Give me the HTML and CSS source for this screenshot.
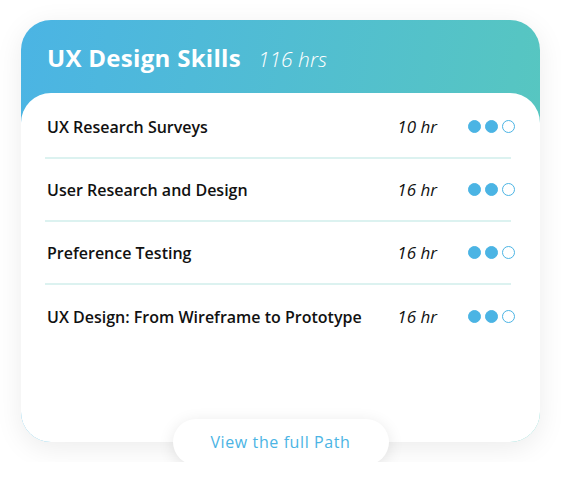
FILE: index.html
```html
<!DOCTYPE html>
<html lang="en">
<head>
    <meta charset="UTF-8">
    <meta name="viewport" content="width=device-width, initial-scale=1.0">
    <title>UX Design Skills</title>
    <link rel="stylesheet" href="styles.css">
</head>
<body>
    <div class="path-card">
        <div class="path-header">
            <h1 class="path-title">UX Design Skills</h1>
            <span class="path-hours">116 hrs</span>
        </div>
        <div class="path-body">
            <div class="course">
                <div class="course-name">UX Research Surveys</div>
                <div class="course-hours">10 hr</div>
                <div class="level">
                    <span class="dot full"></span>
                    <span class="dot full"></span>
                    <span class="dot"></span>
                </div>
            </div>
            <div class="course">
                <div class="course-name">User Research and Design</div>
                <div class="course-hours">16 hr</div>
                <div class="level">
                    <span class="dot full"></span>
                    <span class="dot full"></span>
                    <span class="dot"></span>
                </div>
            </div>
            <div class="course">
                <div class="course-name">Preference Testing</div>
                <div class="course-hours">16 hr</div>
                <div class="level">
                    <span class="dot full"></span>
                    <span class="dot full"></span>
                    <span class="dot"></span>
                </div>
            </div>
            <div class="course">
                <div class="course-name">UX Design: From Wireframe to Prototype</div>
                <div class="course-hours">16 hr</div>
                <div class="level">
                    <span class="dot full"></span>
                    <span class="dot full"></span>
                    <span class="dot"></span>
                </div>
            </div>
        </div>
        <div class="path-footer">
            <a class="path-link" href="#">View the full Path</a>
        </div>
    </div>
</body>
</html>
```

FILE: styles.css
```css
* {
    margin: 0;
    padding: 0;
    box-sizing: border-box;
}

body {
    background: #fff;
    font-family: 'Open Sans', 'Noto Sans', sans-serif;
    color: #111;
    padding: 20px 21px;
}

.path-card {
    width: 519px;
    height: 422px;
    border-radius: 30px;
    background: linear-gradient(100deg, #4bb4e4 0%, #58c8bd 100%);
    box-shadow: 0 6px 28px rgba(0, 0, 0, 0.08);
    display: flex;
    flex-direction: column;
    position: relative;
}

.path-header {
    height: 73px;
    display: flex;
    align-items: baseline;
    padding: 21px 26px 0;
    gap: 17px;
    color: #fff;
}

.path-title {
    font-size: 24px;
    font-weight: 700;
    letter-spacing: 0.3px;
}

.path-hours {
    font-size: 21px;
    font-weight: 300;
    font-style: italic;
}

.path-body {
    flex: 1;
    background: #fff;
    border-radius: 30px;
    padding: 3px 29px 0 24px;
}

.course {
    height: 63px;
    display: flex;
    align-items: center;
    border-bottom: 2px solid #dcf2f0;
    padding-left: 2px;
}

.course:last-child {
    border-bottom: none;
}

.course-name {
    flex: 1;
    font-size: 16px;
    font-weight: 600;
}

.course-hours {
    width: 60px;
    font-size: 17px;
    font-style: italic;
    margin-right: 31px;
    text-align: right;
}

.level {
    display: flex;
    gap: 4px;
    margin-right: -4px;
}

.dot {
    flex-shrink: 0;
    width: 13px;
    height: 13px;
    border-radius: 50%;
    border: 1.5px solid #4bb4e4;
}

.dot.full {
    background: #4bb4e4;
}

.path-footer {
    position: absolute;
    left: 0;
    right: 0;
    bottom: -23px;
    display: flex;
    justify-content: center;
}

.path-link {
    width: 216px;
    height: 46px;
    border-radius: 23px;
    background: #fff;
    box-shadow: 0 3px 16px rgba(0, 0, 0, 0.1);
    display: flex;
    align-items: center;
    justify-content: center;
    color: #4bb4e4;
    font-size: 16px;
    font-weight: 500;
    letter-spacing: 0.6px;
    text-decoration: none;
}
```
